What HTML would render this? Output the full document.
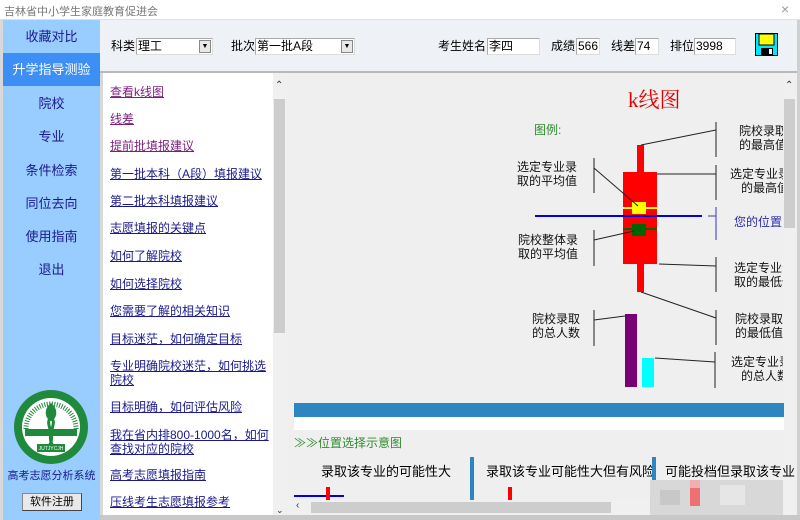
<!DOCTYPE html>
<html><head><meta charset="utf-8">
<style>
*{margin:0;padding:0;box-sizing:border-box}
body{width:800px;height:520px;overflow:hidden;position:relative;background:#f0f0f0;font-family:"Liberation Sans","Noto Sans CJK SC",sans-serif;font-size:12px;color:#000}
.a{position:absolute}
.nav{position:absolute;left:3px;width:97px;height:33px;line-height:33px;text-align:center;font-size:13px;color:#1a1a8c}
.lk{position:absolute;left:110px;font-size:12px;color:#1a1a8c;text-decoration:underline;line-height:14px;width:160px}
.inp{position:absolute;top:38px;height:17px;background:#fff;border:1px solid #aaa;border-right-color:#ddd;border-bottom-color:#ddd;font-size:12px;line-height:15px;padding-left:1px}
.lbl{position:absolute;top:38px;font-size:12px;line-height:17px}
.dd{position:absolute;right:1px;top:1px;width:12px;height:13px;background:#e8e8e8;border:1px solid #888;font-size:7px;line-height:11px;text-align:center}
</style></head><body>
<div class="a" style="left:0;top:0;width:800px;height:20px;background:#fff;border-bottom:1px solid #e0e0e0"></div>
<div class="a" style="left:4px;top:3px;font-size:11px;color:#777">吉林省中小学生家庭教育促进会</div>
<div class="a" style="left:781px;top:1px;font-size:14px;color:#999">×</div>
<div class="a" style="left:0;top:20px;width:3px;height:18px;background:#2e9b3a"></div>
<div class="a" style="left:797px;top:20px;width:3px;height:15px;background:#2e9b3a"></div>
<div class="a" style="left:0;top:20px;width:3px;height:500px;background:#d8d8d8"></div>
<div class="a" style="left:3px;top:20px;width:97px;height:500px;background:#99ccff"></div>
<div class="nav" style="top:20px">收藏对比</div>
<div class="nav" style="top:53px;background:#3d8ef5;color:#fff">升学指导测验</div>
<div class="nav" style="top:87px">院校</div>
<div class="nav" style="top:120px">专业</div>
<div class="nav" style="top:154px">条件检索</div>
<div class="nav" style="top:187px">同位去向</div>
<div class="nav" style="top:220px">使用指南</div>
<div class="nav" style="top:253px">退出</div>
<svg class="a" style="left:13px;top:389px" width="76" height="76" viewBox="0 0 76 76">
<circle cx="38" cy="38" r="37" fill="#1f8a3c"/>
<circle cx="38" cy="38" r="29" fill="#fff"/>
<path d="M13 40 A25 25 0 0 1 63 40" fill="none" stroke="#1f8a3c" stroke-width="5" stroke-dasharray="1 1.5"/>
<rect x="12" y="40" width="52" height="7" fill="#1f8a3c"/>
<path d="M38 28 C30 36 46 46 34 60 M38 28 C46 36 30 46 42 60" stroke="#1f8a3c" stroke-width="3" fill="none"/>
<path d="M38 14 C30 20 32 30 38 32 C44 30 46 20 38 14Z" fill="#1f8a3c"/>
<rect x="24" y="55" width="28" height="8" fill="#1f8a3c"/>
<text x="38" y="61" font-size="5" fill="#fff" text-anchor="middle">JUTJYCJH</text>
</svg>
<div class="a" style="left:3px;top:467px;width:97px;text-align:center;font-size:11px;color:#1a1a8c">高考志愿分析系统</div>
<div class="a" style="left:22px;top:493px;width:60px;height:18px;background:#e9e9e9;border:1px solid #888;border-right-color:#444;border-bottom-color:#444;text-align:center;font-size:11px;line-height:16px">软件注册</div>
<div class="a" style="left:100px;top:20px;width:697px;height:52px;background:#eef2f6"></div>
<div class="a" style="left:100px;top:71px;width:697px;height:2px;background:#b9b9b9"></div>
<div class="lbl" style="left:111px">科类</div>
<div class="inp" style="left:136px;width:77px">理工<div class="dd">▼</div></div>
<div class="lbl" style="left:231px">批次</div>
<div class="inp" style="left:255px;width:100px">第一批A段<div class="dd">▼</div></div>
<div class="lbl" style="left:438px">考生姓名</div>
<div class="inp" style="left:487px;width:53px">李四</div>
<div class="lbl" style="left:551px">成绩</div>
<div class="inp" style="left:576px;width:24px">566</div>
<div class="lbl" style="left:611px">线差</div>
<div class="inp" style="left:635px;width:24px">74</div>
<div class="lbl" style="left:670px">排位</div>
<div class="inp" style="left:694px;width:42px">3998</div>
<svg class="a" style="left:755px;top:33px" width="23" height="23" viewBox="0 0 23 23"><rect x="0.5" y="0.5" width="22" height="22" fill="#00e6ff" stroke="#000"/><rect x="4" y="1" width="15" height="11" fill="#ffff00" stroke="#000"/><rect x="6" y="15" width="12" height="7" fill="#000"/><rect x="14" y="16" width="3" height="5" fill="#fff"/></svg>
<div class="a" style="left:100px;top:73px;width:3px;height:447px;background:#d8d8d8"></div>
<div class="a" style="left:103px;top:73px;width:170px;height:447px;background:#fff"></div>
<div class="a" style="left:273px;top:73px;width:15px;height:447px;background:#f0f0f0"></div>
<div class="a" style="left:275px;top:80px;font-size:10px;color:#333">⌃</div>
<div class="a" style="left:274px;top:99px;width:11px;height:234px;background:#cdcdcd"></div>
<div class="a" style="left:276px;top:505px;font-size:9px;color:#333">⌄</div>
<div class="lk" style="top:85px;color:#7a1f7a">查看k线图</div>
<div class="lk" style="top:112px;color:#7a1f7a">线差</div>
<div class="lk" style="top:139px;color:#7a1f7a">提前批填报建议</div>
<div class="lk" style="top:167px">第一批本科（A段）填报建议</div>
<div class="lk" style="top:194px">第二批本科填报建议</div>
<div class="lk" style="top:221px">志愿填报的关键点</div>
<div class="lk" style="top:249px">如何了解院校</div>
<div class="lk" style="top:277px">如何选择院校</div>
<div class="lk" style="top:304px">您需要了解的相关知识</div>
<div class="lk" style="top:332px">目标迷茫，如何确定目标</div>
<div class="lk" style="top:359px">专业明确院校迷茫，如何挑选院校</div>
<div class="lk" style="top:400px">目标明确，如何评估风险</div>
<div class="lk" style="top:428px">我在省内排800-1000名，如何查找对应的院校</div>
<div class="lk" style="top:468px">高考志愿填报指南</div>
<div class="lk" style="top:495px">压线考生志愿填报参考</div>
<div class="a" style="left:288px;top:73px;width:495px;height:447px;background:#efefef"></div>
<div class="a" style="left:783px;top:73px;width:14px;height:447px;background:#f0f0f0"></div>
<div class="a" style="left:785px;top:80px;font-size:10px;color:#333">⌃</div>
<div class="a" style="left:784px;top:99px;width:11px;height:129px;background:#cdcdcd"></div>
<div class="a" style="left:797px;top:20px;width:3px;height:500px;background:#d0d0d0"></div>
<div class="a" style="left:628px;top:84px;font-size:21px;color:#e00000;font-family:'Liberation Serif','Noto Serif CJK SC',serif">k线图</div>
<svg class="a" style="left:288px;top:110px" width="495" height="300" viewBox="288 110 495 300" font-family="Liberation Sans,Noto Sans CJK SC,sans-serif" font-size="12">
<text x="534" y="134" fill="#2e8b2e">图例:</text>
<rect x="637" y="145" width="7" height="147" fill="#ff0000"/>
<rect x="623" y="172" width="34" height="92" fill="#ff0000"/>
<line x1="623" y1="208" x2="657" y2="208" stroke="#ffff00" stroke-width="2"/>
<rect x="632" y="202" width="14" height="12" fill="#ffff00"/>
<line x1="623" y1="229" x2="657" y2="229" stroke="#006400" stroke-width="2"/>
<rect x="632" y="224" width="14" height="12" fill="#006400"/>
<line x1="535" y1="216" x2="702" y2="216" stroke="#0000e0" stroke-width="2"/>
<rect x="625" y="314" width="12" height="73" fill="#7a0078"/>
<rect x="642" y="358" width="12" height="29" fill="#00ffff"/>
<g stroke="#222" fill="none" stroke-width="1">
<line x1="594" y1="158" x2="594" y2="193"/><line x1="594" y1="168" x2="638" y2="206"/>
<line x1="594" y1="230" x2="594" y2="266"/><line x1="594" y1="240" x2="634" y2="231"/>
<line x1="594" y1="310" x2="594" y2="346"/><line x1="594" y1="320" x2="625" y2="316"/>
<line x1="716" y1="122" x2="716" y2="157"/><line x1="641" y1="145" x2="716" y2="130"/>
<line x1="716" y1="165" x2="716" y2="200"/><line x1="657" y1="174" x2="716" y2="174"/>
<line x1="716" y1="257" x2="716" y2="292"/><line x1="659" y1="264" x2="716" y2="266"/>
<line x1="716" y1="310" x2="716" y2="345"/><line x1="641" y1="292" x2="716" y2="318"/>
<line x1="715" y1="352" x2="715" y2="388"/><line x1="655" y1="358" x2="715" y2="362"/>
</g>
<path d="M708 216 H716 M716 207 V240" stroke="#3333cc" fill="none"/>
<g fill="#111" text-anchor="middle">
<text x="547" y="171">选定专业录</text><text x="547" y="185">取的平均值</text>
<text x="548" y="244">院校整体录</text><text x="548" y="258">取的平均值</text>
<text x="556" y="323">院校录取</text><text x="556" y="337">的总人数</text>
</g>
<g fill="#111">
<text x="739" y="135">院校录取</text><text x="739" y="149">的最高值</text>
<text x="730" y="178">选定专业录</text><text x="741" y="192">的最高值</text>
<text x="734" y="272">选定专业录</text><text x="734" y="286">取的最低值</text>
<text x="735" y="323">院校录取</text><text x="735" y="337">的最低值</text>
<text x="731" y="366">选定专业录</text><text x="741" y="380">的总人数</text>
</g>
<text x="734" y="226" fill="#2a2ab0">您的位置</text>
</svg>
<div class="a" style="left:294px;top:403px;width:490px;height:14px;background:#2e86c1"></div>
<div class="a" style="left:294px;top:417px;width:490px;height:13px;background:#fff"></div>
<div class="a" style="left:294px;top:434px;font-size:12px;color:#2e8b2e">≫≫位置选择示意图</div>
<div class="a" style="left:321px;top:461px;font-size:13px">录取该专业的可能性大</div>
<div class="a" style="left:470px;top:457px;width:4px;height:50px;background:#2e86c1"></div>
<div class="a" style="left:486px;top:461px;font-size:13px">录取该专业可能性大但有风险</div>
<div class="a" style="left:652px;top:457px;width:4px;height:50px;background:#2e86c1"></div>
<div class="a" style="left:665px;top:461px;font-size:13px">可能投档但录取该专业</div>
<div class="a" style="left:294px;top:495px;width:50px;height:2px;background:#0000e0"></div>
<div class="a" style="left:326px;top:487px;width:4px;height:20px;background:#f00"></div>
<div class="a" style="left:318px;top:500px;width:20px;height:6px;background:#f00"></div>
<div class="a" style="left:508px;top:487px;width:4px;height:20px;background:#f00"></div>
<div class="a" style="left:500px;top:500px;width:20px;height:6px;background:#f00"></div>
<div class="a" style="left:650px;top:480px;width:133px;height:40px;background:#d8d8d8"></div>
<div class="a" style="left:660px;top:490px;width:20px;height:15px;background:#c8c8c8"></div>
<div class="a" style="left:720px;top:485px;width:25px;height:20px;background:#e6e6e6"></div>
<div class="a" style="left:690px;top:480px;width:10px;height:8px;background:#f0b0b0"></div>
<div class="a" style="left:690px;top:488px;width:10px;height:18px;background:#ee7070"></div>
<div class="a" style="left:288px;top:500px;width:362px;height:15px;background:#f0f0f0"></div>
<div class="a" style="left:296px;top:500px;font-size:10px;color:#333">‹</div>
<div class="a" style="left:311px;top:502px;width:300px;height:11px;background:#cdcdcd"></div>
<div class="a" style="left:100px;top:515px;width:700px;height:5px;background:#c8c8c8"></div>
</body></html>
